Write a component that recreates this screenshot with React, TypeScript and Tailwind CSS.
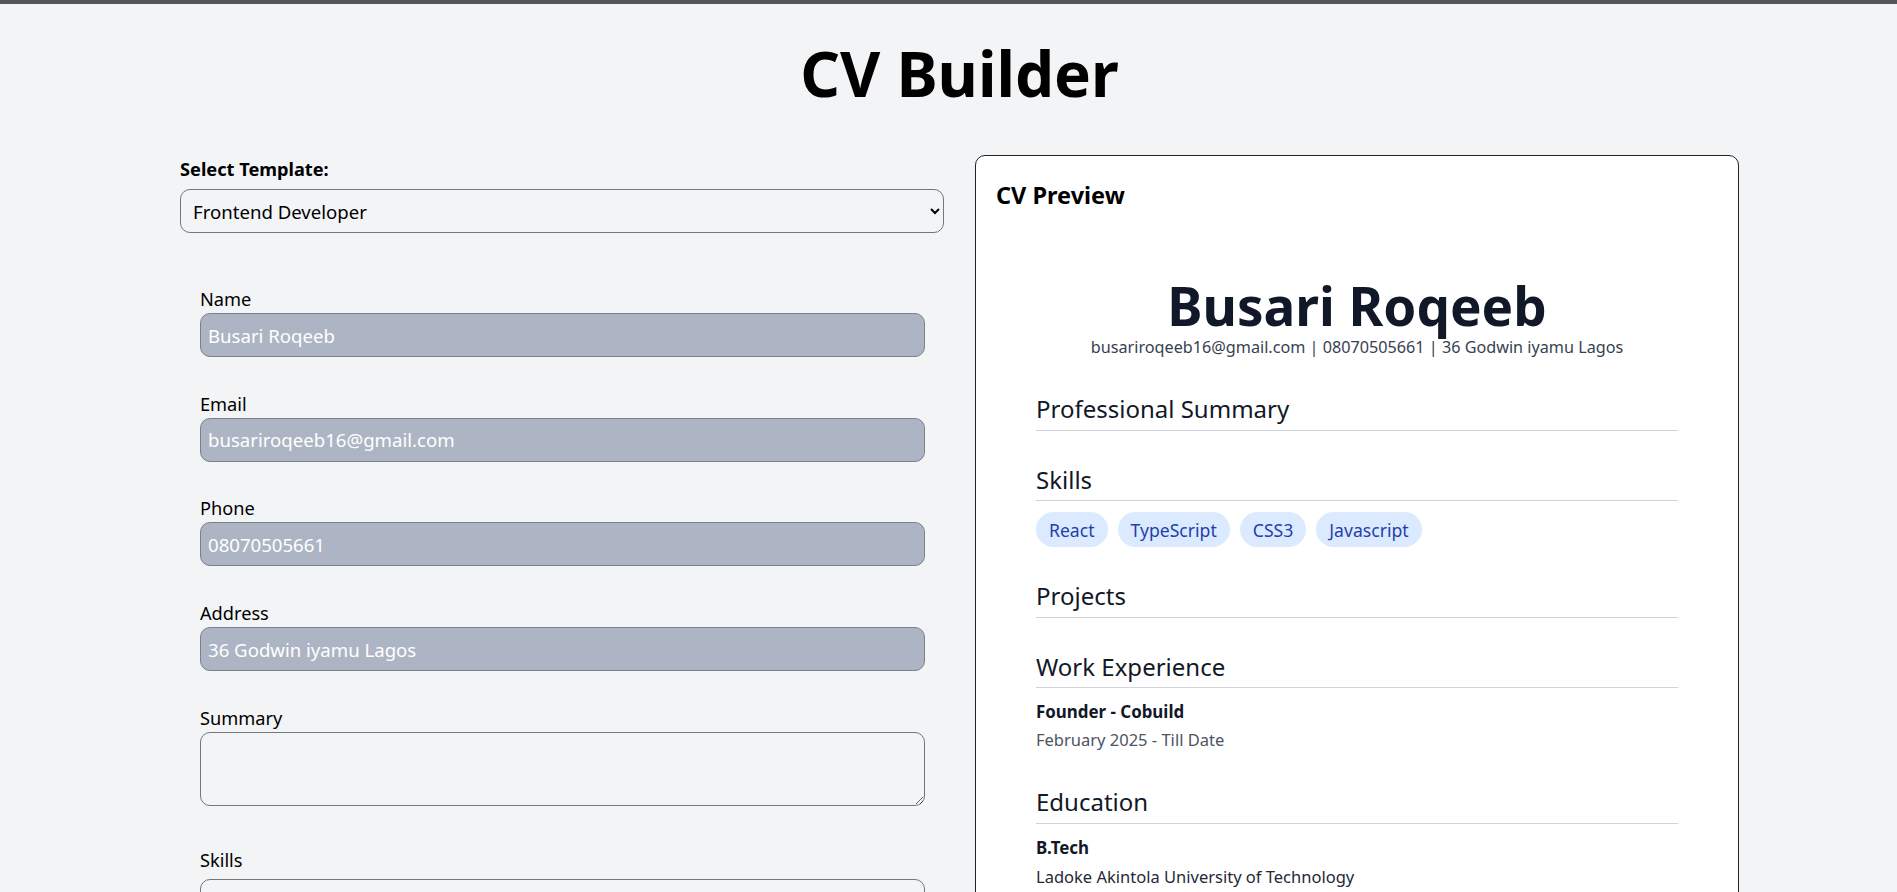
import { useState } from "react";

const templates = ["Frontend Developer", "Backend Developer", "Product Designer"];

interface Field {
  key: string;
  label: string;
  value: string;
}

const initialFields: Field[] = [
  { key: "name", label: "Name", value: "Busari Roqeeb" },
  { key: "email", label: "Email", value: "busariroqeeb16@gmail.com" },
  { key: "phone", label: "Phone", value: "08070505661" },
  { key: "address", label: "Address", value: "36 Godwin iyamu Lagos" },
];

const skills = ["React", "TypeScript", "CSS3", "Javascript"];

function SectionTitle({ children }: { children: string }) {
  return (
    <h3 className="text-[24px] leading-[32px] text-[#111827] pb-[4.5px] border-b border-[#d1d5db] mb-[11px]">
      {children}
    </h3>
  );
}

export default function App() {
  const [template, setTemplate] = useState(templates[0]);
  const [fields, setFields] = useState(initialFields);
  const [summary, setSummary] = useState("");
  const [skillInput, setSkillInput] = useState("");

  const get = (k: string) => fields.find((f) => f.key === k)?.value ?? "";

  return (
    <div className="min-h-screen bg-[#f3f4f6] font-['Noto_Sans',sans-serif] text-black">
      <div className="h-[4px] bg-[#565656]" />
      <h1 className="mt-[38px] ml-[180px] w-[1559px] text-center text-[62px] leading-none font-bold">
        CV Builder
      </h1>

      <div className="ml-[180px] w-[1559px] mt-[51px] grid grid-cols-[765px_764px] gap-[30px] items-start pb-10">
        {/* left: form */}
        <div>
          <label className="block mt-[1px] text-[18.2px] leading-[26px] font-bold">
            Select Template:
          </label>
          <select
            value={template}
            onChange={(e) => setTemplate(e.target.value)}
            className="mt-[7px] block w-[764px] h-[44px] px-[8px] rounded-[10px] border border-[#767676] bg-transparent text-[18.6px]"
          >
            {templates.map((t) => (
              <option key={t}>{t}</option>
            ))}
          </select>

          <form className="mt-[53px] px-[20px]" onSubmit={(e) => e.preventDefault()}>
            {fields.map((f) => (
              <div key={f.key} className="mb-[33.7px]">
                <label className="block text-[18.2px] leading-[26px]">{f.label}</label>
                <input
                  value={f.value}
                  onChange={(e) =>
                    setFields(
                      fields.map((x) =>
                        x.key === f.key ? { ...x, value: e.target.value } : x
                      )
                    )
                  }
                  className="mt-[1px] block w-full h-[44px] px-[7px] rounded-[10px] border border-[#7c808a] bg-[#adb5c4] text-white text-[18.6px] outline-none"
                />
              </div>
            ))}

            <div className="mb-[41px]">
              <label className="block text-[18.2px] leading-[26px]">Summary</label>
              <textarea
                value={summary}
                onChange={(e) => setSummary(e.target.value)}
                className="mt-[1px] block w-full h-[74px] px-[7px] py-[4px] rounded-[10px] border border-[#767676] bg-transparent text-[18.6px]"
              />
            </div>

            <div className="mb-[33px]">
              <label className="block text-[18.2px] leading-[26px]">Skills</label>
              <input
                value={skillInput}
                onChange={(e) => setSkillInput(e.target.value)}
                className="mt-[6px] block w-full h-[44px] px-[7px] rounded-[10px] border border-[#767676] bg-transparent text-[18.6px]"
              />
            </div>
          </form>
        </div>

        {/* right: preview */}
        <div className="bg-white border border-[#222] rounded-[10px] pt-[25px] px-[20px] pb-[40px]">
          <h2 className="text-[23.5px] leading-[28px] font-bold">CV Preview</h2>

          <div className="px-[40px] mt-[70px]">
            <div className="text-center mb-[35px]">
              <div className="text-[53px] leading-none font-bold text-[#111827]">{get("name")}</div>
              <div className="mt-[4px] text-[16.2px] leading-[22px] text-[#374151]">
                {get("email")} | {get("phone")} | {get("address")}
              </div>
            </div>

            <section className="mb-[33px]">
              <SectionTitle>Professional Summary</SectionTitle>
              {summary && <p className="text-[16.5px] text-[#374151]">{summary}</p>}
            </section>

            <section className="mb-[33px]">
              <SectionTitle>Skills</SectionTitle>
              <div className="flex flex-wrap gap-[10px]">
                {skills.map((s) => (
                  <span
                    key={s}
                    className="px-[13px] py-[4.6px] rounded-full bg-[#dbeafe] text-[#1e40af] text-[17.6px] leading-[26px]"
                  >
                    {s}
                  </span>
                ))}
              </div>
            </section>

            <section className="mb-[33px]">
              <SectionTitle>Projects</SectionTitle>
            </section>

            <section className="mb-[33px]">
              <SectionTitle>Work Experience</SectionTitle>
              <div>
                <div className="text-[16.9px] leading-[26px] font-bold text-[#111827]">
                  Founder - Cobuild
                </div>
                <div className="mt-[2px] text-[16.5px] leading-[26px] text-[#4b5563]">
                  February 2025 - Till Date
                </div>
              </div>
            </section>

            <section className="mb-[33px]">
              <SectionTitle>Education</SectionTitle>
              <div>
                <div className="text-[16.9px] leading-[26px] font-bold text-[#111827]">B.Tech</div>
                <div className="mt-[3px] text-[16.5px] leading-[26px] text-[#1f2937]">
                  Ladoke Akintola University of Technology
                </div>
                <div className="text-[16.5px] leading-[26px] text-[#4b5563]">2015 - 2020</div>
              </div>
            </section>
          </div>
        </div>
      </div>
    </div>
  );
}
